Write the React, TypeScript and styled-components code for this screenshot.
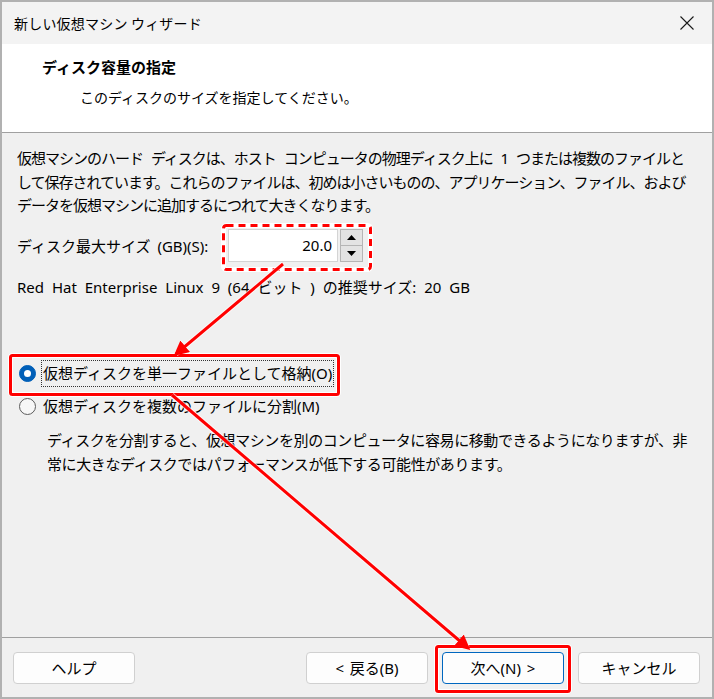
import React from "react";
import styled, { createGlobalStyle } from "styled-components";

const GlobalStyle = createGlobalStyle`
  html, body {
    margin: 0;
    padding: 0;
    background: #ffffff;
  }
  * {
    box-sizing: border-box;
  }
`;

const FONT = `"Noto Sans CJK JP", "Noto Sans", sans-serif`;
// body text: latin glyphs from Noto Sans, japanese from Noto Sans CJK
const UI_FONT = `"Noto Sans", "Noto Sans CJK JP", sans-serif`;

const Window = styled.div`
  position: relative;
  width: 714px;
  height: 699px;
  border: 2px solid #b1b1b1;
  display: flex;
  flex-direction: column;
  font-family: ${FONT};
  font-size: 14px;
  color: #000;
  background: #f0f0f0;
  overflow: hidden;
`;

const TitleBar = styled.div`
  height: 42px;
  flex: none;
  background: #f3f3f3;
  display: flex;
  align-items: center;
  justify-content: space-between;
  padding: 0 12px 0 12px;
`;

const TitleText = styled.span`
  font-size: 14px;
  letter-spacing: 0.2px;
`;

const CloseButton = styled.span`
  width: 46px;
  height: 42px;
  display: flex;
  align-items: center;
  justify-content: center;
  margin-right: -10px;
`;

const Header = styled.div`
  height: 89px;
  flex: none;
  background: #ffffff;
  border-bottom: 1px solid #a0a0a0;
  padding: 12px 0 0 40px;
`;

const HeaderTitle = styled.div`
  font-size: 15px;
  font-weight: 700;
  line-height: 22px;
`;

const HeaderSub = styled.div`
  font-size: 14px;
  line-height: 22px;
  margin: 8px 0 0 38px;
`;

const Body = styled.div`
  flex: 1;
  padding: 14px 15px 0 15px;
  border-bottom: 1px solid #a0a0a0;
  font-family: ${UI_FONT};
  font-size: 15px;
`;

const Paragraph = styled.p<{ $indent?: number; $tracking?: number; $words?: number }>`
  margin: 0;
  padding-left: ${(p) => p.$indent ?? 0}px;
  line-height: 23.5px;
  white-space: nowrap;
  letter-spacing: ${(p) => p.$tracking ?? 0}px;
  word-spacing: ${(p) => p.$words ?? 0}px;
`;

const FieldRow = styled.div`
  display: flex;
  align-items: center;
  margin-top: 11px;
  height: 33px;
`;

const FieldLabel = styled.label`
  width: 211px;
  word-spacing: 3px;
`;

const SpinBox = styled.div`
  display: flex;
  align-items: stretch;
  height: 33px;
`;

const NumberInput = styled.div`
  width: 110px;
  background: #ffffff;
  border: 1px solid #d4d4d4;
  text-align: right;
  padding: 0 5px;
  font-size: 15px;
  line-height: 31px;
`;

const SpinButtons = styled.div`
  display: flex;
  flex-direction: column;
  margin-left: 2px;
  width: 23px;
`;

const SpinButton = styled.div`
  flex: 1;
  background: #e3e3e3;
  border: 1px solid #b5b5b5;
  display: flex;
  align-items: center;
  justify-content: center;
  & + & {
    border-top: none;
  }
`;

const Recommend = styled.div`
  margin-top: 14px;
  line-height: 23.5px;
  word-spacing: 4px;
`;

const RadioGroup = styled.div`
  margin-top: 61px;
  display: flex;
  flex-direction: column;
  gap: 6px;
`;

const RadioRow = styled.div`
  display: flex;
  align-items: center;
  height: 27px;
`;

const RadioDot = styled.span<{ $checked?: boolean }>`
  width: 17px;
  height: 17px;
  border-radius: 50%;
  flex: none;
  margin-left: 2px;
  background: ${(p) => (p.$checked ? "#005fb8" : "#f7f7f7")};
  border: 1px solid ${(p) => (p.$checked ? "#005fb8" : "#5c5c5c")};
  display: flex;
  align-items: center;
  justify-content: center;
  &::after {
    content: "";
    display: ${(p) => (p.$checked ? "block" : "none")};
    width: 7px;
    height: 7px;
    border-radius: 50%;
    background: #ffffff;
  }
`;

const RadioLabel = styled.span<{ $focused?: boolean }>`
  margin-left: 5px;
  padding: 0 1px;
  height: 27px;
  line-height: 25px;
  border: 1px dotted ${(p) => (p.$focused ? "#333" : "transparent")};
`;

const Description = styled(Paragraph)`
  margin-top: 9px;
`;

const Footer = styled.div`
  height: 59px;
  flex: none;
  display: flex;
  align-items: center;
  justify-content: space-between;
  padding: 0 12px 0 11px;
`;

const ButtonGroup = styled.div`
  display: flex;
  gap: 14px;
`;

const Button = styled.button<{ $primary?: boolean }>`
  width: 122px;
  height: 32px;
  font-family: ${UI_FONT};
  font-size: 15px;
  word-spacing: 2px;
  color: #000;
  background: #fdfdfd;
  border: 1px solid ${(p) => (p.$primary ? "#0067c0" : "#d0d0d0")};
  border-radius: 4px;
  padding: 0;
`;

const Overlay = styled.svg`
  position: absolute;
  left: -2px;
  top: -2px;
  pointer-events: none;
`;

function Annotations() {
  const boxes = [
    { x: 10.5, y: 355.5, w: 328, h: 39 },
    { x: 436.5, y: 646.5, w: 133, h: 45 },
  ];
  const arrows = [
    { x1: 283, y1: 264, x2: 176, y2: 354 },
    { x1: 172, y1: 395, x2: 468, y2: 648 },
  ];
  return (
    <Overlay width={714} height={699} viewBox="0 0 714 699">
      <defs>
        <marker
          id="head"
          markerWidth="5"
          markerHeight="5"
          refX="4"
          refY="2.5"
          orient="auto"
          markerUnits="strokeWidth"
        >
          <path d="M0,0 L5,2.5 L0,5 z" fill="#ff0000" />
        </marker>
      </defs>
      <rect x={223.5} y={225.5} width={147} height={44} rx={3} fill="none" stroke="#ffffff" strokeWidth={5} />
      <rect
        x={223.5}
        y={225.5}
        width={147}
        height={44}
        rx={3}
        fill="none"
        stroke="#ff0000"
        strokeWidth={3}
        strokeDasharray="7 5"
      />
      {boxes.map((b, i) => (
        <g key={i}>
          <rect x={b.x} y={b.y} width={b.w} height={b.h} rx={2} fill="none" stroke="#ffffff" strokeWidth={5} />
          <rect x={b.x} y={b.y} width={b.w} height={b.h} rx={2} fill="none" stroke="#ff0000" strokeWidth={3} />
        </g>
      ))}
      {arrows.map((a, i) => (
        <g key={i}>
          <line x1={a.x1} y1={a.y1} x2={a.x2} y2={a.y2} stroke="#ffffff" strokeWidth={5} opacity={0.7} />
          <line
            x1={a.x1}
            y1={a.y1}
            x2={a.x2}
            y2={a.y2}
            stroke="#ff0000"
            strokeWidth={3}
            markerEnd="url(#head)"
          />
        </g>
      ))}
    </Overlay>
  );
}

export default function App() {
  return (
    <>
      <GlobalStyle />
      <Window>
        <TitleBar>
          <TitleText>新しい仮想マシン ウィザード</TitleText>
          <CloseButton>
            <svg width="16" height="16" viewBox="0 0 16 16">
              <path d="M1.5 1.5 L14.5 14.5 M14.5 1.5 L1.5 14.5" stroke="#1a1a1a" strokeWidth="1.1" />
            </svg>
          </CloseButton>
        </TitleBar>
        <Header>
          <HeaderTitle>ディスク容量の指定</HeaderTitle>
          <HeaderSub>このディスクのサイズを指定してください。</HeaderSub>
        </Header>
        <Body>
          <Paragraph $tracking={-1} $words={5}>
            仮想マシンのハード ディスクは、ホスト コンピュータの物理ディスク上に 1 つまたは複数のファイルと
            <br />
            して保存されています。これらのファイルは、初めは小さいものの、アプリケーション、ファイル、および
            <br />
            データを仮想マシンに追加するにつれて大きくなります。
          </Paragraph>
          <FieldRow>
            <FieldLabel>ディスク最大サイズ (GB)(S):</FieldLabel>
            <SpinBox>
              <NumberInput>20.0</NumberInput>
              <SpinButtons>
                <SpinButton>
                  <svg width="9" height="5" viewBox="0 0 9 5">
                    <path d="M0 5 L4.5 0 L9 5 z" fill="#000" />
                  </svg>
                </SpinButton>
                <SpinButton>
                  <svg width="9" height="5" viewBox="0 0 9 5">
                    <path d="M0 0 L4.5 5 L9 0 z" fill="#000" />
                  </svg>
                </SpinButton>
              </SpinButtons>
            </SpinBox>
          </FieldRow>
          <Recommend>Red Hat Enterprise Linux 9 (64 ビット ) の推奨サイズ: 20 GB</Recommend>
          <RadioGroup>
            <RadioRow>
              <RadioDot $checked />
              <RadioLabel $focused>仮想ディスクを単一ファイルとして格納(O)</RadioLabel>
            </RadioRow>
            <RadioRow>
              <RadioDot />
              <RadioLabel>仮想ディスクを複数のファイルに分割(M)</RadioLabel>
            </RadioRow>
          </RadioGroup>
          <Description $indent={30} $tracking={-0.4}>
            ディスクを分割すると、仮想マシンを別のコンピュータに容易に移動できるようになりますが、非
            <br />
            常に大きなディスクではパフォーマンスが低下する可能性があります。
          </Description>
        </Body>
        <Footer>
          <Button>ヘルプ</Button>
          <ButtonGroup>
            <Button>&lt; 戻る(B)</Button>
            <Button $primary>次へ(N) &gt;</Button>
            <Button>キャンセル</Button>
          </ButtonGroup>
        </Footer>
        <Annotations />
      </Window>
    </>
  );
}
